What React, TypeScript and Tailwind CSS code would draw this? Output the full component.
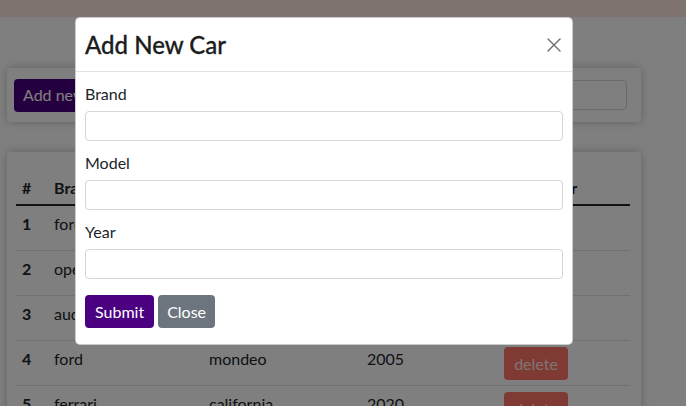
import { X } from "lucide-react"

type Car = { id: number; brand: string; model: string; year: number }

const cars: Car[] = [
  { id: 1, brand: "ford", model: "focus", year: 2010 },
  { id: 2, brand: "opel", model: "astra", year: 2012 },
  { id: 3, brand: "audi", model: "a4", year: 2015 },
  { id: 4, brand: "ford", model: "mondeo", year: 2005 },
  { id: 5, brand: "ferrari", model: "california", year: 2020 },
]

function Field({ label }: { label: string }) {
  return (
    <div className="mb-[10px]">
      <label className="mb-[5px] block text-[16px] leading-[24px] text-[#212529]">{label}</label>
      <input type="text" className="block h-[30px] w-full rounded-[4px] border border-[#d3d6da] bg-white px-2 outline-none" />
    </div>
  )
}

export default function App() {
  return (
    <div className="relative h-[406px] overflow-hidden bg-white font-['Lato','Noto_Sans',sans-serif] text-[#212529]">
      <div className="h-[17px] bg-[#ffe6e1]" />

      <div className="ml-[7px] mt-[51px] flex h-[54px] w-[634px] items-center justify-between rounded-[4px] bg-white pl-[7px] pr-[14px] shadow-[0_0_10px_rgba(0,0,0,0.25)]">
        <button type="button" className="h-[33px] rounded-[4px] bg-[#4b0082] px-[9px] text-[16px] text-white">
          Add new car
        </button>
        <input type="text" className="h-[30px] w-[260px] rounded-[4px] border border-[#d3d6da]" />
      </div>

      <div className="ml-[7px] mt-[30px] w-[634px] rounded-[4px] bg-white pb-4 pl-[9px] pr-[11px] pt-[18px] shadow-[0_0_10px_rgba(0,0,0,0.25)]">
        <table className="w-full border-collapse text-left text-[16px] leading-[24px]">
          <thead>
            <tr className="border-b-2 border-[#212529]">
              <th className="w-[32px] px-[6px] pb-[4px] pt-[6px] font-bold">#</th>
              <th className="w-[155px] px-[6px] pb-[4px] pt-[6px] font-bold">Brand</th>
              <th className="w-[158px] px-[6px] pb-[4px] pt-[6px] font-bold">Model</th>
              <th className="w-[137px] px-[6px] pb-[4px] pt-[6px] font-bold">Year</th>
              <th className="px-[6px] pb-[4px] pt-[6px] font-bold">Delete car</th>
            </tr>
          </thead>
          <tbody>
            {cars.map((car) => (
              <tr key={car.id} className="border-b border-[#dee2e6] align-top">
                <td className="px-[6px] pb-[5px] pt-[6px] font-bold">{car.id}</td>
                <td className="px-[6px] pb-[5px] pt-[6px]">{car.brand}</td>
                <td className="px-[6px] pb-[5px] pt-[6px]">{car.model}</td>
                <td className="px-[6px] pb-[5px] pt-[6px]">{car.year}</td>
                <td className="px-[6px] pb-[5px] pt-[6px]">
                  <button type="button" className="h-[33px] w-[64px] rounded-[4px] bg-[#ff7468] text-[16px] text-[#ffe8e4]">
                    delete
                  </button>
                </td>
              </tr>
            ))}
          </tbody>
        </table>
      </div>

      <div className="absolute inset-0 bg-black/50" />

      <div className="absolute left-[75px] top-[17px] w-[498px] rounded-[5px] border border-black/20 bg-white">
        <div className="flex h-[54px] items-center justify-between border-b border-[#dee2e6] pl-[9px] pr-[4px]">
          <h5 className="text-[24px] font-medium leading-[30px] text-[#1a1d20] [-webkit-text-stroke:0.3px_#1a1d20]">Add New Car</h5>
          <button type="button" className="flex h-[28px] w-[28px] items-center justify-center text-[#6e6e6e]" aria-label="Close">
            <X className="h-[24px] w-[24px]" strokeWidth={1.4} />
          </button>
        </div>
        <form className="px-[9px] pb-[16px] pt-[10px]">
          <Field label="Brand" />
          <Field label="Model" />
          <Field label="Year" />
          <div className="mt-[16px] flex gap-[4px]">
            <button type="button" className="h-[33px] rounded-[4px] bg-[#4b0082] px-[10px] text-[16px] text-white">
              Submit
            </button>
            <button type="button" className="h-[33px] rounded-[4px] bg-[#6c757d] px-[9px] text-[16px] text-white">
              Close
            </button>
          </div>
        </form>
      </div>
    </div>
  )
}
